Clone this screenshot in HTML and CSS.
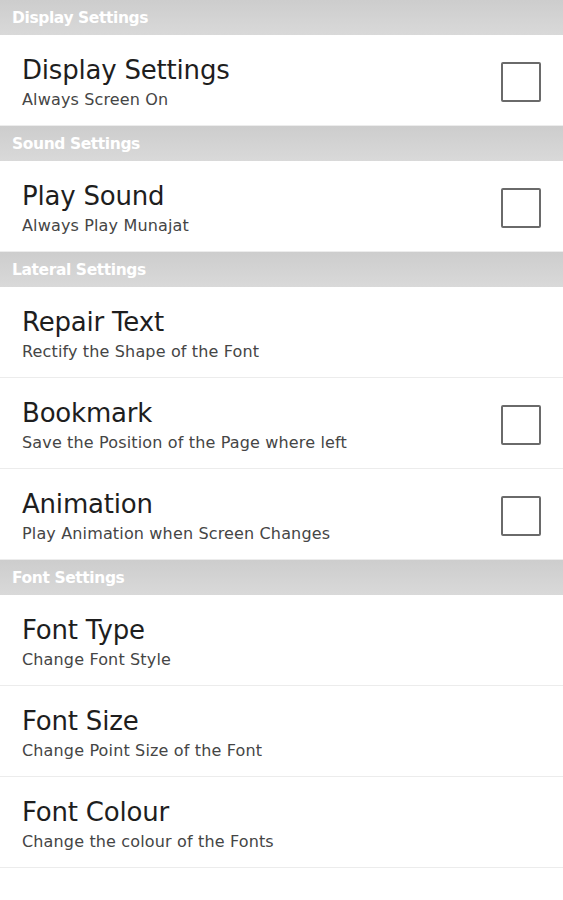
FILE: index.html
```html
<!DOCTYPE html>
<html lang="en">
<head>
  <meta charset="UTF-8">
  <meta name="viewport" content="width=device-width, initial-scale=1.0">
  <title>Settings</title>
  <link rel="stylesheet" href="styles.css">
</head>
<body>

<div class="settings">

  <div class="group-title">Display Settings</div>
  <div class="item">
    <div class="item-text">
      <div class="item-name">Display Settings</div>
      <div class="item-desc">Always Screen On</div>
    </div>
    <span class="check"></span>
  </div>

  <div class="group-title">Sound Settings</div>
  <div class="item">
    <div class="item-text">
      <div class="item-name">Play Sound</div>
      <div class="item-desc">Always Play Munajat</div>
    </div>
    <span class="check"></span>
  </div>

  <div class="group-title">Lateral Settings</div>
  <div class="item">
    <div class="item-text">
      <div class="item-name">Repair Text</div>
      <div class="item-desc">Rectify the Shape of the Font</div>
    </div>
  </div>
  <div class="item">
    <div class="item-text">
      <div class="item-name">Bookmark</div>
      <div class="item-desc">Save the Position of the Page where left</div>
    </div>
    <span class="check"></span>
  </div>
  <div class="item">
    <div class="item-text">
      <div class="item-name">Animation</div>
      <div class="item-desc">Play Animation when Screen Changes</div>
    </div>
    <span class="check"></span>
  </div>

  <div class="group-title">Font Settings</div>
  <div class="item">
    <div class="item-text">
      <div class="item-name">Font Type</div>
      <div class="item-desc">Change Font Style</div>
    </div>
  </div>
  <div class="item">
    <div class="item-text">
      <div class="item-name">Font Size</div>
      <div class="item-desc">Change Point Size of the Font</div>
    </div>
  </div>
  <div class="item">
    <div class="item-text">
      <div class="item-name">Font Colour</div>
      <div class="item-desc">Change the colour of the Fonts</div>
    </div>
  </div>

</div>

</body>
</html>
```

FILE: styles.css
```css
body {
  margin: 0;
  background-color: #fff;
  font-family: "DejaVu Sans", "Liberation Sans", sans-serif;
}
.settings {
  display: flex;
  flex-direction: column;
}
.group-title {
  height: 35px;
  line-height: 36px;
  padding-left: 12px;
  background: linear-gradient(to bottom, #cdcdcd, #d9d9d9);
  color: #fff;
  font-size: 15.5px;
  font-weight: 600;
  letter-spacing: -0.4px;
}
.item {
  display: flex;
  align-items: center;
  justify-content: space-between;
  height: 90px;
  padding: 0 22px;
  border-bottom: 1px solid #ececec;
}
.item-text {
  display: flex;
  flex-direction: column;
  gap: 6px;
  padding-top: 4px;
}
.item-name {
  font-size: 26px;
  line-height: 30px;
  color: #1e1e1e;
  letter-spacing: -0.2px;
}
.item-desc {
  font-size: 16px;
  line-height: 18px;
  color: #454545;
  letter-spacing: 0.15px;
}
.check {
  width: 36px;
  height: 36px;
  margin-top: 4px;
  border: 2px solid #6a6a6a;
  border-radius: 2px;
}
```
